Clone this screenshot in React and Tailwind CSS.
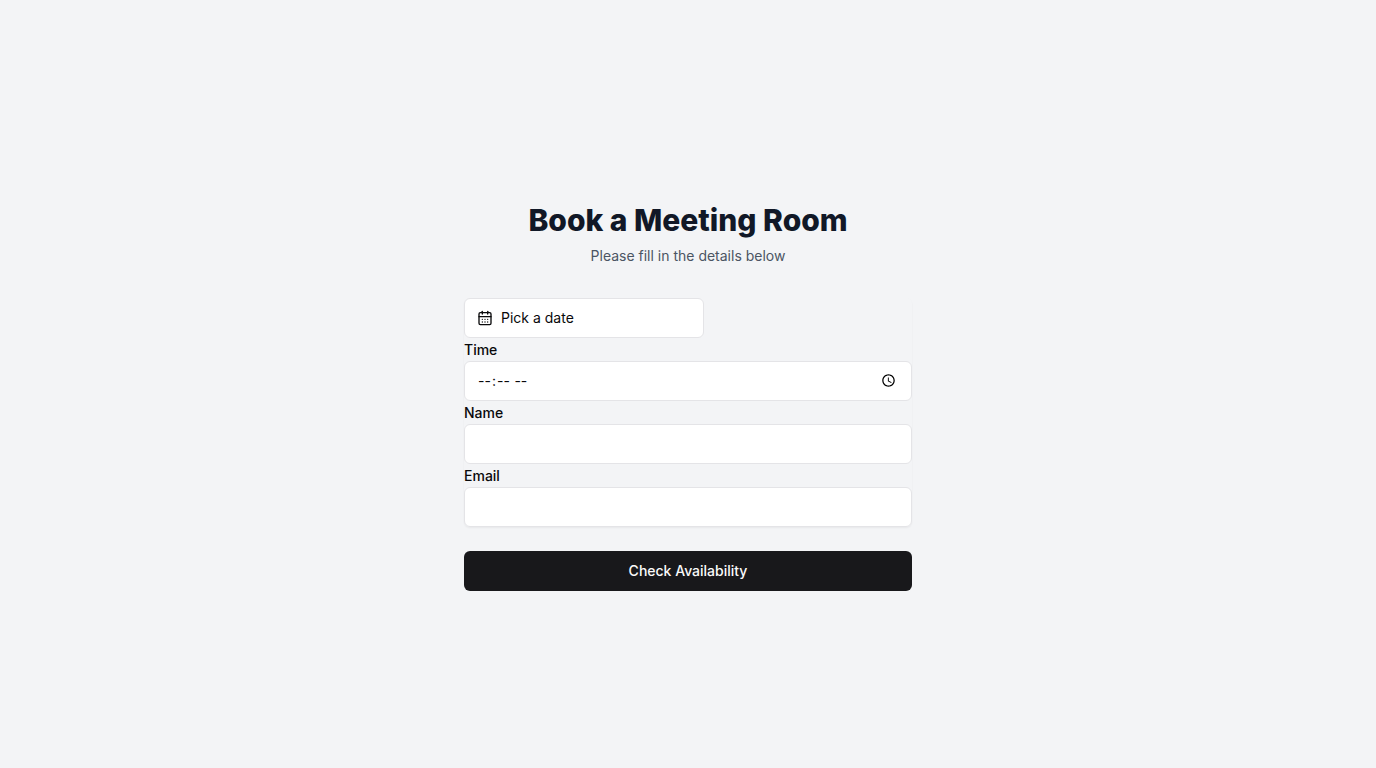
import React from "react";
import { CalendarDays } from "lucide-react";

const inputClass =
  "block h-10 w-full rounded-md border border-[#e4e4e7] bg-white px-3 py-2 text-sm text-[#09090b]";

function Field({ id, label, type }) {
  return (
    <div>
      <label htmlFor={id} className="block text-sm leading-[23px] font-medium text-[#09090b]">
        {label}
      </label>
      <input id={id} name={id} type={type} className={inputClass} />
    </div>
  );
}

export default function App() {
  return (
    <main className="flex min-h-screen items-center justify-center bg-[#f3f4f6] px-4 py-12 font-['Inter',sans-serif]">
      <div className="w-full max-w-md space-y-8">
        <header>
          <h1 className="mt-6 text-center text-3xl font-extrabold text-[#111827]">
            Book a Meeting Room
          </h1>
          <p className="mt-2 text-center text-sm text-[#4b5563]">
            Please fill in the details below
          </p>
        </header>
        <form className="mt-8 space-y-6" onSubmit={(e) => e.preventDefault()}>
          <div className="rounded-md shadow-xs">
            <button
              type="button"
              className="flex h-10 w-60 items-center rounded-md border border-[#e4e4e7] bg-white px-3 text-sm text-[#09090b]"
            >
              <CalendarDays className="mr-2 size-4" />
              Pick a date
            </button>
            <Field id="time" label="Time" type="time" />
            <Field id="name" label="Name" type="text" />
            <Field id="email" label="Email" type="email" />
          </div>
          <button
            type="submit"
            className="h-10 w-full rounded-md bg-[#18181b] px-4 text-sm font-medium text-[#fafafa]"
          >
            Check Availability
          </button>
        </form>
      </div>
    </main>
  );
}
